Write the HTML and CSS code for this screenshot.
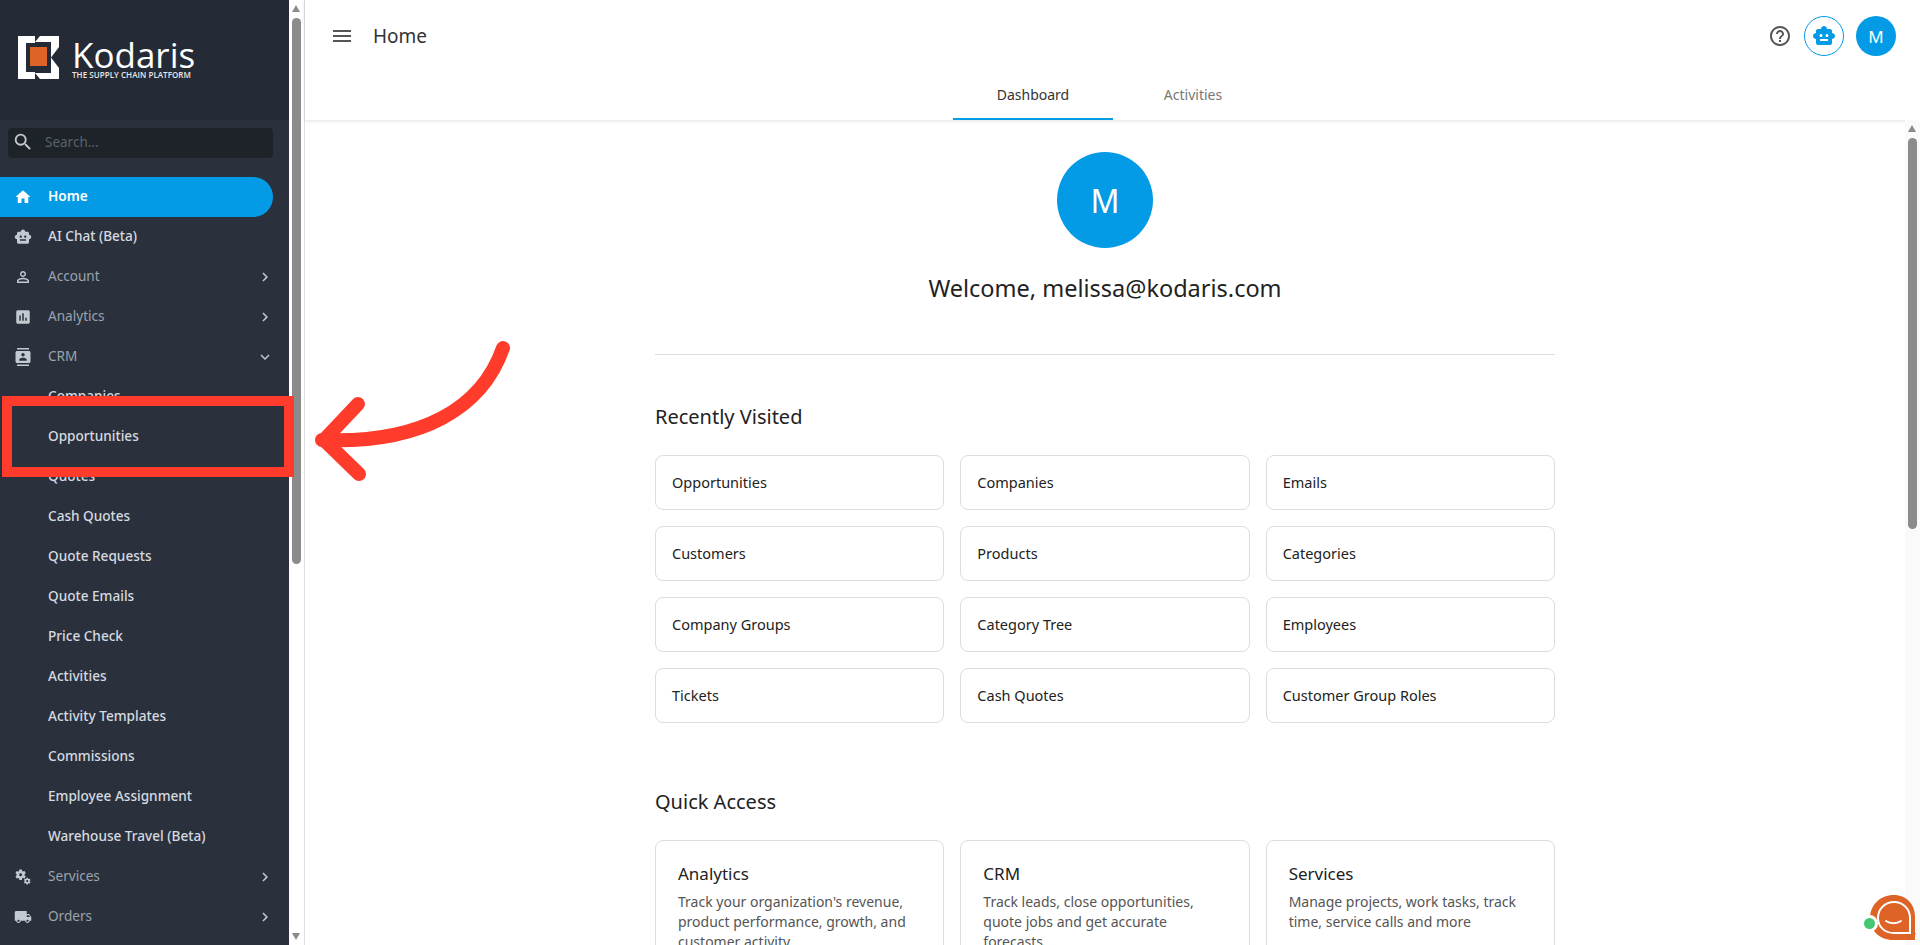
FILE: index.html
```html
<!DOCTYPE html>
<html lang="en">
<head>
    <meta charset="UTF-8">
    <title>Kodaris - Home</title>
    <link rel="stylesheet" href="styles.css">
</head>
<body>

<div class="app">
    <aside class="sidebar">
        <div class="logo_area">
            <svg class="logo_mark" width="42" height="43" viewBox="0 0 42 43">
                <path fill="#fff" d="M0 0H17V7H8V36H17V43H0Z"/>
                <path fill="#fff" d="M22 0H41V11L33 21.500L41 32V43H22L17 37H33V6H17Z"/>
                <rect x="12" y="11" width="17" height="19" fill="#dd6327"/>
            </svg>
            <div class="logo_text">
                <div class="logo_name">Kodaris</div>
                <div class="logo_sub">THE SUPPLY CHAIN PLATFORM</div>
            </div>
        </div>

        <div class="search">
            <svg width="22" height="22" viewBox="0 0 24 24"><path fill="#c3c9d0" d="M15.500 14h-.79l-.28-.27A6.470 6.470 0 0 0 16 9.500 6.500 6.500 0 1 0 9.500 16c1.610 0 3.090-.59 4.230-1.570l.27.28v.79l5 4.990L20.490 19l-4.990-5zm-6 0C7.010 14 5 11.990 5 9.500S7.010 5 9.500 5 14 7.010 14 9.500 11.990 14 9.500 14z"/></svg>
            <span>Search...</span>
        </div>

        <nav class="menu">
            <a class="item active">
                <svg viewBox="0 0 24 24"><path d="M10 20v-6h4v6h5v-8h3L12 3 2 12h3v8z"/></svg>
                <span>Home</span>
            </a>
            <a class="item open_item">
                <svg viewBox="0 0 24 24"><path d="M20 9V7c0-1.100-.9-2-2-2h-3c0-1.660-1.340-3-3-3S9 3.340 9 5H6c-1.100 0-2 .9-2 2v2c-1.660 0-3 1.340-3 3s1.340 3 3 3v4c0 1.100.9 2 2 2h12c1.100 0 2-.9 2-2v-4c1.660 0 3-1.340 3-3s-1.340-3-3-3zM7.500 11.500c0-.83.67-1.500 1.500-1.500s1.500.67 1.500 1.500S9.830 13 9 13s-1.500-.67-1.500-1.500zM16 17H8v-2h8v2zm-1-4c-.83 0-1.500-.67-1.500-1.500S14.170 10 15 10s1.500.67 1.500 1.500S15.830 13 15 13z"/></svg>
                <span>AI Chat (Beta)</span>
            </a>
            <a class="item">
                <svg viewBox="0 0 24 24"><path d="M12 5.900a2.100 2.100 0 1 1 0 4.200 2.100 2.100 0 0 1 0-4.200m0 9c2.970 0 6.100 1.460 6.100 2.100v1.100H5.900V17c0-.64 3.130-2.100 6.100-2.100M12 4C9.790 4 8 5.790 8 8s1.790 4 4 4 4-1.790 4-4-1.790-4-4-4zm0 9c-2.670 0-8 1.340-8 4v3h16v-3c0-2.660-5.330-4-8-4z"/></svg>
                <span>Account</span>
                <svg class="caret" viewBox="0 0 24 24"><path d="M10 6L8.590 7.410 13.170 12l-4.580 4.590L10 18l6-6z"/></svg>
            </a>
            <a class="item">
                <svg viewBox="0 0 24 24"><path d="M19 3H5c-1.100 0-2 .9-2 2v14c0 1.100.9 2 2 2h14c1.100 0 2-.9 2-2V5c0-1.100-.9-2-2-2zM9 17H7v-7h2v7zm4 0h-2V7h2v10zm4 0h-2v-4h2v4z"/></svg>
                <span>Analytics</span>
                <svg class="caret" viewBox="0 0 24 24"><path d="M10 6L8.590 7.410 13.170 12l-4.580 4.590L10 18l6-6z"/></svg>
            </a>
            <a class="item">
                <svg viewBox="0 0 24 24"><path d="M20 0H4v2h16V0zM4 24h16v-2H4v2zM20 4H4c-1.100 0-2 .9-2 2v12c0 1.100.9 2 2 2h16c1.100 0 2-.9 2-2V6c0-1.100-.9-2-2-2zm-8 2.750c1.240 0 2.250 1.010 2.250 2.250s-1.010 2.250-2.250 2.250S9.750 10.240 9.750 9 10.760 6.750 12 6.750zM17 17H7v-1.500c0-1.670 3.330-2.500 5-2.500s5 .83 5 2.500V17z"/></svg>
                <span>CRM</span>
                <svg class="caret" viewBox="0 0 24 24"><path d="M16.590 8.590L12 13.170 7.410 8.590 6 10l6 6 6-6z"/></svg>
            </a>
            <a class="item sub">Companies</a>
            <a class="item sub">Opportunities</a>
            <a class="item sub">Quotes</a>
            <a class="item sub">Cash Quotes</a>
            <a class="item sub">Quote Requests</a>
            <a class="item sub">Quote Emails</a>
            <a class="item sub">Price Check</a>
            <a class="item sub">Activities</a>
            <a class="item sub">Activity Templates</a>
            <a class="item sub">Commissions</a>
            <a class="item sub">Employee Assignment</a>
            <a class="item sub">Warehouse Travel (Beta)</a>
            <a class="item">
                <svg viewBox="0 0 24 24"><path d="M14.170 13.710l1.400-2.420c.09-.15.05-.34-.08-.45l-1.480-1.160c.03-.22.05-.45.05-.68s-.02-.46-.05-.69l1.480-1.160c.13-.11.17-.3.08-.45l-1.400-2.420c-.09-.15-.27-.21-.43-.15l-1.740.7c-.36-.28-.75-.51-1.180-.69l-.26-1.850c-.03-.16-.18-.29-.35-.29h-2.800c-.17 0-.32.13-.35.3L6.800 4.150c-.42.18-.82.41-1.180.69l-1.740-.7c-.16-.06-.34 0-.43.15l-1.400 2.420c-.09.15-.05.34.08.45l1.480 1.160c-.03.22-.05.45-.05.68s.02.46.05.69l-1.480 1.160c-.13.11-.17.3-.08.45l1.400 2.420c.09.15.27.21.43.15l1.740-.7c.36.28.75.51 1.180.69l.26 1.850c.03.16.18.29.35.29h2.800c.17 0 .32-.13.35-.3l.26-1.850c.42-.18.82-.41 1.180-.69l1.740.7c.16.06.34 0 .43-.15zM8.810 11c-1.100 0-2-.9-2-2s.9-2 2-2 2 .9 2 2-.9 2-2 2zM21.920 18.670l-.96-.74c.02-.14.04-.29.04-.44 0-.15-.01-.3-.04-.44l.95-.74c.08-.07.11-.19.05-.29l-.9-1.550c-.05-.1-.17-.13-.28-.1l-1.110.45c-.23-.18-.48-.33-.76-.44l-.17-1.180c-.01-.12-.11-.2-.21-.2h-1.790c-.11 0-.21.08-.22.19l-.17 1.180c-.27.12-.53.26-.76.44l-1.110-.45c-.1-.04-.22 0-.28.1l-.9 1.550c-.05.1-.04.22.05.29l.95.74c-.02.14-.03.29-.03.44 0 .15.01.3.03.44l-.95.74c-.08.07-.11.19-.05.29l.9 1.550c.05.1.17.13.28.1l1.110-.45c.23.18.48.33.76.44l.17 1.180c.02.11.11.19.22.19h1.790c.11 0 .21-.08.22-.19l.17-1.180c.27-.12.53-.26.76-.44l1.110.45c.1.04.22 0 .28-.1l.9-1.550c.06-.09.03-.21-.05-.28zm-4.290.16c-.74 0-1.350-.6-1.350-1.350s.6-1.350 1.350-1.350 1.350.6 1.350 1.350-.61 1.350-1.350 1.350z"/></svg>
                <span>Services</span>
                <svg class="caret" viewBox="0 0 24 24"><path d="M10 6L8.590 7.410 13.170 12l-4.580 4.590L10 18l6-6z"/></svg>
            </a>
            <a class="item">
                <svg viewBox="0 0 24 24"><path d="M20 8h-3V4H3c-1.100 0-2 .9-2 2v11h2c0 1.660 1.340 3 3 3s3-1.340 3-3h6c0 1.660 1.340 3 3 3s3-1.340 3-3h2v-5l-3-4zM6 18.500c-.83 0-1.500-.67-1.500-1.500s.67-1.500 1.500-1.500 1.500.67 1.500 1.500-.67 1.500-1.500 1.500zm13.500-9l1.960 2.500H17V9.500h2.500zm-1.500 9c-.83 0-1.500-.67-1.500-1.500s.67-1.500 1.500-1.500 1.500.67 1.500 1.500-.67 1.500-1.500 1.500z"/></svg>
                <span>Orders</span>
                <svg class="caret" viewBox="0 0 24 24"><path d="M10 6L8.590 7.410 13.170 12l-4.580 4.590L10 18l6-6z"/></svg>
            </a>
        </nav>
    </aside>

    <div class="side_scroll">
        <i class="arrow_up"></i>
        <div class="thumb side_thumb"></div>
        <i class="arrow_down"></i>
    </div>

    <div class="main">
        <header class="topbar">
            <div class="top_row">
                <svg class="burger" width="24" height="24" viewBox="0 0 24 24"><path fill="#555" d="M3 18h18v-2H3v2zm0-5h18v-2H3v2zm0-7v2h18V6H3z"/></svg>
                <div class="page_title">Home</div>
                <div class="top_icons">
                    <svg width="24" height="24" viewBox="0 0 24 24"><path fill="#555" d="M11 18h2v-2h-2v2zm1-16C6.480 2 2 6.480 2 12s4.480 10 10 10 10-4.480 10-10S17.520 2 12 2zm0 18c-4.410 0-8-3.590-8-8s3.590-8 8-8 8 3.590 8 8-3.590 8-8 8zm0-14c-2.210 0-4 1.790-4 4h2c0-1.100.9-2 2-2s2 .9 2 2c0 2-3 1.750-3 5h2c0-2.250 3-2.500 3-5 0-2.210-1.790-4-4-4z"/></svg>
                    <div class="bot_btn">
                        <svg width="24" height="24" viewBox="0 0 24 24"><path fill="#039be5" d="M20 9V7c0-1.100-.9-2-2-2h-3c0-1.660-1.340-3-3-3S9 3.340 9 5H6c-1.100 0-2 .9-2 2v2c-1.660 0-3 1.340-3 3s1.340 3 3 3v4c0 1.100.9 2 2 2h12c1.100 0 2-.9 2-2v-4c1.660 0 3-1.340 3-3s-1.340-3-3-3zM7.500 11.500c0-.83.67-1.500 1.500-1.500s1.500.67 1.500 1.500S9.830 13 9 13s-1.500-.67-1.500-1.500zM16 17H8v-2h8v2zm-1-4c-.83 0-1.500-.67-1.500-1.500S14.170 10 15 10s1.500.67 1.500 1.500S15.830 13 15 13z"/></svg>
                    </div>
                    <div class="avatar_small">M</div>
                </div>
            </div>
            <div class="tabs">
                <div class="tab tab_on">Dashboard</div>
                <div class="tab">Activities</div>
            </div>
        </header>

        <div class="content_wrap">
            <main class="content">
                <div class="welcome">
                    <div class="avatar_big">M</div>
                    <h1>Welcome, melissa@kodaris.com</h1>
                </div>

                <h2>Recently Visited</h2>
                <div class="link_grid">
                    <a class="link_card">Opportunities</a>
                    <a class="link_card">Companies</a>
                    <a class="link_card">Emails</a>
                    <a class="link_card">Customers</a>
                    <a class="link_card">Products</a>
                    <a class="link_card">Categories</a>
                    <a class="link_card">Company Groups</a>
                    <a class="link_card">Category Tree</a>
                    <a class="link_card">Employees</a>
                    <a class="link_card">Tickets</a>
                    <a class="link_card">Cash Quotes</a>
                    <a class="link_card">Customer Group Roles</a>
                </div>

                <h2 class="quick_title">Quick Access</h2>
                <div class="quick_grid">
                    <article class="quick_card">
                        <h3>Analytics</h3>
                        <p>Track your organization's revenue, product performance, growth, and customer activity</p>
                    </article>
                    <article class="quick_card">
                        <h3>CRM</h3>
                        <p>Track leads, close opportunities, quote jobs and get accurate forecasts</p>
                    </article>
                    <article class="quick_card">
                        <h3>Services</h3>
                        <p>Manage projects, work tasks, track time, service calls and more</p>
                    </article>
                </div>
            </main>
            <div class="main_scroll">
                <i class="arrow_up"></i>
                <div class="thumb main_thumb"></div>
                <i class="arrow_down"></i>
            </div>
        </div>
    </div>
</div>

<!-- annotation drawn over the screenshot -->
<div class="red_box"></div>
<svg class="red_arrow" width="220" height="170" viewBox="0 0 220 170">
    <path d="M193 18C172 78 112 114 12 110" fill="none" stroke="#ff3b2c" stroke-width="14" stroke-linecap="round"/>
    <path d="M48 74L14 110L49 144" fill="none" stroke="#ff3b2c" stroke-width="14" stroke-linecap="round" stroke-linejoin="round"/>
</svg>

<!-- chat bubble -->
<div class="chat">
    <svg width="46" height="45" viewBox="0 0 46 45">
        <path fill="#dd6327" d="M24 0C10 0 0 10 0 23C0 36 10 45 23 45H45V22C45 9 36 0 24 0Z"/>
        <path fill="none" stroke="#fff" stroke-width="2" d="M24 7C15 7 8 14 8 23C8 32 15 38 24 38H40V23C40 14 33 7 24 7Z"/>
        <path fill="none" stroke="#fff" stroke-width="2" stroke-linecap="round" d="M16 26C20 29 27 29 31 26"/>
    </svg>
    <div class="chat_dot"></div>
</div>

</body>
</html>
```
FILE: styles.css
```css
*{
    box-sizing: border-box;
}
html, body{
    margin: 0;
    height: 100%;
    overflow: hidden;
}
body{
    font-family: "Noto Sans", "Open Sans", sans-serif;
    background-color: white;
    color: #222;
}
.app{
    display: flex;
    height: 945px;
}

/* sidebar */
.sidebar{
    width: 289px;
    flex-shrink: 0;
    background-color: #2b313c;
    overflow: hidden;
}
.logo_area{
    height: 120px;
    background-color: #252b36;
    display: flex;
    align-items: center;
    gap: 12px;
    padding-left: 18px;
    padding-bottom: 6px;
}
.logo_mark{
    flex-shrink: 0;
}
.logo_text{
    margin-top: 3px;
}
.logo_name{
    font-family: "Open Sans", sans-serif;
    font-size: 35px;
    line-height: 34px;
    color: white;
}
.logo_sub{
    font-family: "Open Sans", sans-serif;
    font-size: 8px;
    font-weight: 600;
    line-height: 8px;
    margin-top: -1px;
    color: #e8e8e8;
    letter-spacing: 0.05px;
    white-space: nowrap;
}
.search{
    margin: 8px 16px 0 8px;
    height: 30px;
    background-color: #1e2229;
    border-radius: 4px;
    display: flex;
    align-items: center;
    gap: 11px;
    padding-left: 4px;
    padding-bottom: 2px;
    font-size: 13.500px;
    color: #5a626c;
}
.menu{
    margin-top: 19px;
}
.item{
    height: 40px;
    margin-right: 16px;
    padding-bottom: 4px;
    display: flex;
    align-items: center;
    padding-left: 48px;
    position: relative;
    font-size: 13.600px;
    color: #9aa3ad;
    white-space: nowrap;
}
.item svg{
    position: absolute;
    left: 14px;
    top: 11px;
    width: 18px;
    height: 18px;
    fill: #c3c9d0;
}
.item svg.caret{
    left: auto;
    right: -1px;
    top: 11px;
    width: 18px;
    height: 18px;
}
.item.active{
    background-color: #039be5;
    border-radius: 0 20px 20px 0;
    color: white;
    font-weight: 600;
}
.item.active svg{
    fill: white;
}
.item.open_item, .item.sub{
    color: #d5dae0;
    font-weight: 500;
}

/* scrollbars */
.side_scroll{
    width: 15px;
    flex-shrink: 0;
    position: relative;
    background-color: white;
}
.thumb{
    position: absolute;
    background-color: #8b8b8b;
    border-radius: 5px;
}
.side_thumb{
    left: 3px;
    width: 9px;
    top: 18px;
    height: 546px;
}
.arrow_up, .arrow_down{
    position: absolute;
    left: 3px;
    width: 0;
    height: 0;
    border-left: 4.500px solid transparent;
    border-right: 4.500px solid transparent;
}
.arrow_up{
    top: 5px;
    border-bottom: 7px solid #8b8b8b;
}
.arrow_down{
    bottom: 5px;
    border-top: 7px solid #8b8b8b;
}

/* main column */
.main{
    flex: 1;
    min-width: 0;
    display: flex;
    flex-direction: column;
    border-left: 1px solid #e0e0e0;
}
.topbar{
    height: 120px;
    flex-shrink: 0;
    box-shadow: 0 1px 4px rgba(0,0,0,0.12);
    position: relative;
}
.top_row{
    height: 72px;
    display: flex;
    align-items: center;
    padding-left: 25px;
    padding-right: 24px;
}
.burger{
    margin-right: 19px;
}
.page_title{
    font-size: 19px;
    color: #333;
}
.top_icons{
    margin-left: auto;
    display: flex;
    align-items: center;
    gap: 10px;
}
.bot_btn{
    width: 40px;
    height: 40px;
    border: 1px solid #039be5;
    border-radius: 50%;
    display: flex;
    align-items: center;
    justify-content: center;
    margin-left: 2px;
    margin-right: 2px;
}
.avatar_small{
    width: 40px;
    height: 40px;
    border-radius: 50%;
    background-color: #039be5;
    color: white;
    font-size: 17px;
    display: flex;
    align-items: center;
    justify-content: center;
}
.tabs{
    display: flex;
    justify-content: center;
    height: 48px;
    padding-left: 1px;
}
.tab{
    width: 160px;
    text-align: center;
    font-size: 14px;
    line-height: 24px;
    color: #777;
    padding-top: 11px;
}
.tab_on{
    color: #333;
    border-bottom: 2px solid #039be5;
}

/* page content */
.content_wrap{
    flex: 1;
    min-height: 0;
    display: flex;
    overflow: hidden;
}
.content{
    flex: 1;
    min-width: 0;
    padding: 32px 0 0 350px;
}
.content > *{
    width: 900px;
}
.welcome{
    height: 203px;
    text-align: center;
    border-bottom: 1px solid #ddd;
}
.avatar_big{
    width: 96px;
    height: 96px;
    margin: 0 auto;
    border-radius: 50%;
    background-color: #039be5;
    color: white;
    font-size: 32px;
    display: flex;
    align-items: center;
    justify-content: center;
}
h1{
    margin: 24px 0 0;
    font-size: 23.500px;
    line-height: 33px;
    font-weight: 400;
    color: #222;
}
h2{
    margin: 48px 0 25px;
    font-size: 20px;
    line-height: 27px;
    font-weight: 400;
    color: #222;
}
.quick_title{
    margin-top: 65px;
}
.link_grid{
    display: grid;
    grid-template-columns: repeat(3, 1fr);
    gap: 16px;
}
.link_card{
    height: 55px;
    border: 1px solid #ddd;
    border-radius: 8px;
    padding-left: 16px;
    padding-bottom: 2px;
    display: flex;
    align-items: center;
    font-size: 14.500px;
    color: #222;
}
.quick_grid{
    display: grid;
    grid-template-columns: repeat(3, 1fr);
    gap: 16px;
}
.quick_card{
    height: 140px;
    border: 1px solid #ddd;
    border-radius: 8px;
    padding: 21px 20px 0 22px;
}
h3{
    margin: 0 0 6px;
    font-size: 17px;
    line-height: 24px;
    font-weight: 400;
    color: #222;
}
.quick_card p{
    margin: 0;
    font-size: 14px;
    line-height: 20px;
    color: #555;
}
.main_scroll{
    width: 15px;
    flex-shrink: 0;
    position: relative;
    background-color: #fafafa;
}
.main_scroll .arrow_up{
    top: 5px;
}
.main_thumb{
    left: 3px;
    width: 9px;
    top: 18px;
    height: 391px;
}

/* annotation + chat float over the page */
.red_box{
    position: absolute;
    left: 2px;
    top: 396px;
    width: 292px;
    height: 81px;
    border: 10px solid #ff3b2c;
}
.red_arrow{
    position: absolute;
    left: 310px;
    top: 330px;
}
.chat{
    position: absolute;
    left: 1870px;
    top: 895px;
    width: 46px;
    height: 45px;
}
.chat_dot{
    position: absolute;
    left: -9px;
    top: 20px;
    width: 17px;
    height: 17px;
    border: 3px solid white;
    border-radius: 50%;
    background-color: #44c76f;
}
```
